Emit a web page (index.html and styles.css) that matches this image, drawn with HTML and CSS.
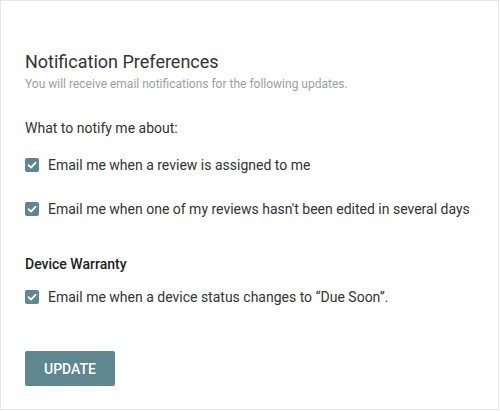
FILE: index.html
```html
<!DOCTYPE html>
<html>
<head>
<meta charset="utf-8">
<link rel="stylesheet" href="styles.css">
</head>
<body>
<div class="card">
  <h1 class="title">Notification Preferences</h1>
  <p class="subtitle">You will receive email notifications for the following updates.</p>
  <p class="label">What to notify me about:</p>
  <label class="check first">
    <span class="box"><svg viewBox="0 0 14 14" width="14" height="14"><path d="M3.5 7.2 L6 9.6 L10.6 4.6" fill="none" stroke="#fff" stroke-width="1.8" stroke-linecap="round" stroke-linejoin="round"/></svg></span>
    <span>Email me when a review is assigned to me</span>
  </label>
  <label class="check second">
    <span class="box"><svg viewBox="0 0 14 14" width="14" height="14"><path d="M3.5 7.2 L6 9.6 L10.6 4.6" fill="none" stroke="#fff" stroke-width="1.8" stroke-linecap="round" stroke-linejoin="round"/></svg></span>
    <span>Email me when one of my reviews hasn't been edited in several days</span>
  </label>
  <h2 class="section">Device Warranty</h2>
  <label class="check third">
    <span class="box"><svg viewBox="0 0 14 14" width="14" height="14"><path d="M3.5 7.2 L6 9.6 L10.6 4.6" fill="none" stroke="#fff" stroke-width="1.8" stroke-linecap="round" stroke-linejoin="round"/></svg></span>
    <span>Email me when a device status changes to “Due Soon”.</span>
  </label>
  <button class="btn">UPDATE</button>
</div>
</body>
</html>
```
FILE: styles.css
```css
html, body {
  margin: 0;
  padding: 0;
  background: #fff;
}
body {
  font-family: Roboto, "Liberation Sans", sans-serif;
  color: #333;
}
.card {
  box-sizing: border-box;
  width: 499px;
  height: 410px;
  border: 1px solid #e6e6e6;
  padding: 49px 24px 0 24px;
  display: flex;
  flex-direction: column;
  align-items: flex-start;
}
.title {
  margin: 0;
  font-size: 18px;
  line-height: 24px;
  font-weight: 400;
  color: #333;
}
.subtitle {
  margin: 2px 0 0;
  font-size: 12px;
  line-height: 16px;
  color: #9e9e9e;
}
.label {
  margin: 26px 0 0;
  font-size: 14px;
  line-height: 20px;
  color: #333;
}
.check {
  display: flex;
  align-items: center;
  gap: 9px;
  font-size: 14px;
  line-height: 20px;
  color: #333;
}
.first { margin-top: 17px; }
.second { margin-top: 24px; }
.third { margin-top: 13px; }
.box {
  width: 14px;
  height: 14px;
  border-radius: 2px;
  background: #5e8790;
  display: flex;
}
.section {
  margin: 35px 0 0;
  font-size: 14px;
  line-height: 20px;
  font-weight: 500;
  color: #222;
}
.btn {
  margin-top: 44px;
  width: 90px;
  height: 35px;
  border: none;
  border-radius: 2px;
  background: #5e8790;
  color: #fff;
  font-family: Roboto, "Liberation Sans", sans-serif;
  font-size: 14px;
  font-weight: 500;
  padding: 0;
}
```
